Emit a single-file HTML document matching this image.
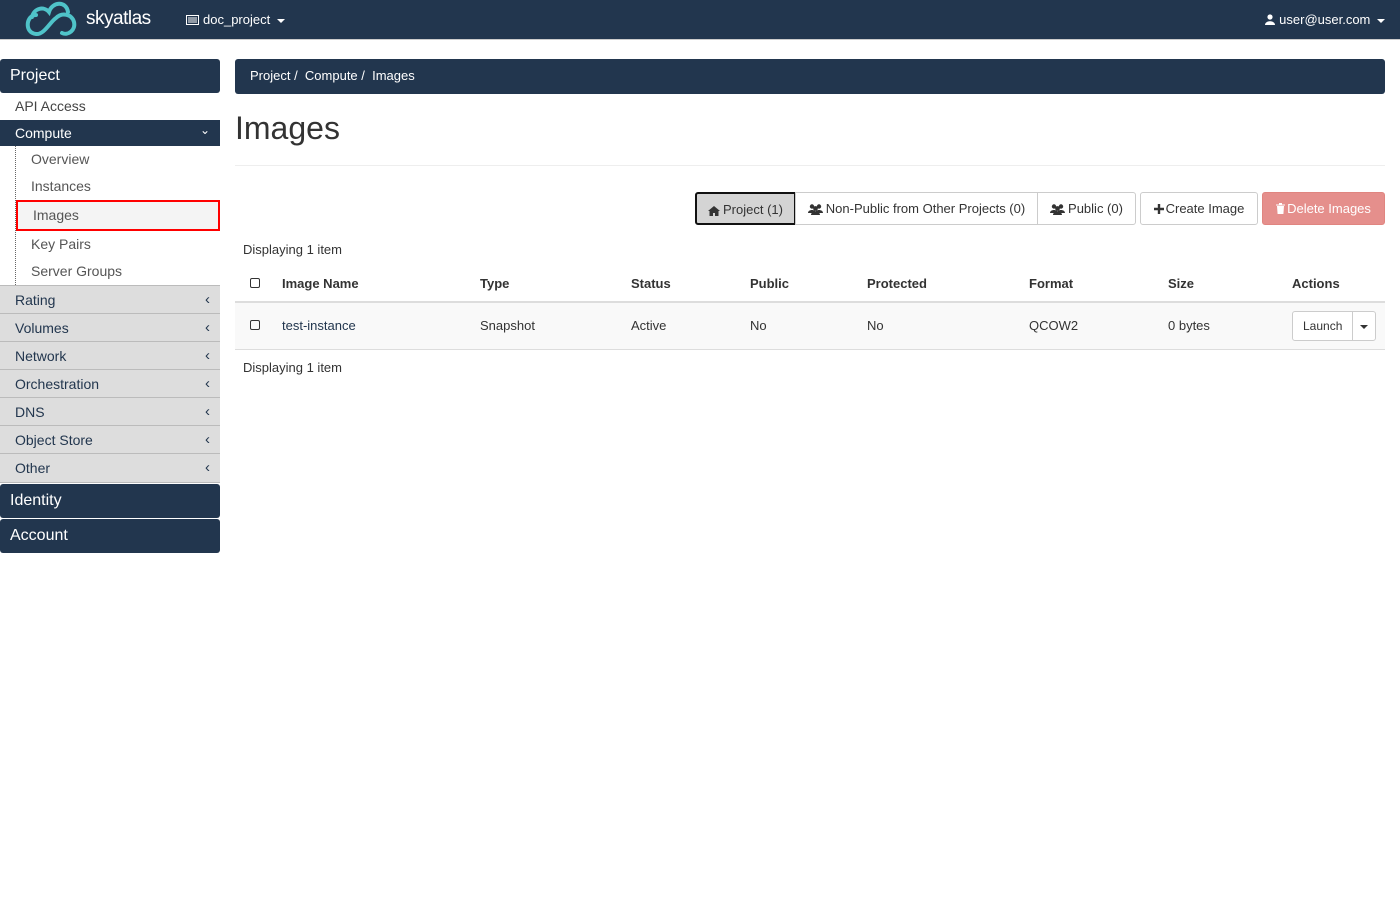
<!DOCTYPE html>
<html><head><meta charset="utf-8"><style>
*{box-sizing:border-box;margin:0;padding:0}
body{width:1400px;height:900px;background:#fff;font-family:"Liberation Sans",Arial,sans-serif;color:#333;font-size:13px;position:relative;overflow:hidden}
.top{position:absolute;left:0;top:0;width:1400px;height:40px;background:#22364e;border-bottom:1px solid #ccc}
.top .brand{position:absolute;left:86px;top:8px;color:#fff;font-size:19px;letter-spacing:-0.5px}
.top .proj{position:absolute;left:186px;top:12px;color:#fff;font-size:13px}
.top .user{position:absolute;right:15px;top:12px;color:#fff;font-size:13px}
.caret{display:inline-block;width:0;height:0;border-left:4px solid transparent;border-right:4px solid transparent;border-top:4px solid currentColor;vertical-align:middle;margin-left:3px}
.side{position:absolute;left:0;top:59px;width:220px}
.hd{background:#22364e;color:#fff;font-size:16px;height:34px;line-height:33px;padding-left:10px;border-radius:3px}
.it{height:27px;line-height:27px;padding-left:15px;font-size:14px;color:#444}
.cmp{background:#22364e;color:#fff;height:26px;line-height:26px;padding-left:15px;font-size:14px;position:relative}
.sub{border-left:1px dotted #666;margin-left:15px}
.sub div{height:27px;line-height:27px;padding-left:15px;font-size:14px;color:#555}
.sub .act{border:2px solid red;background:#f4f4f4;padding-left:15px;height:31px;line-height:27px;margin:0}
.gr{background:#ddd;color:#22364e;height:28px;line-height:28px;padding-left:15px;font-size:14px;border-top:1px solid #bbb;position:relative}
.gr span{position:absolute;right:10px;top:0;font-size:15px}
.cmp span{position:absolute;right:10px;top:-3px;font-size:12px}
.crumb{position:absolute;left:235px;top:59px;width:1150px;height:35px;background:#22364e;border-radius:3px;color:#fff;line-height:34px;padding-left:15px;font-size:13px}
h1{position:absolute;left:235px;top:110px;font-size:32px;font-weight:400;color:#333}
.hr{position:absolute;left:235px;top:165px;width:1150px;border-top:1px solid #eee}
.btn{position:absolute;top:192px;height:33px;line-height:31px;border:1px solid #ccc;background:#fff;font-size:13px;padding:0;text-align:center;color:#333;border-radius:3px;white-space:nowrap}
.btn svg{vertical-align:-2px;margin-right:3px}
.disp{position:absolute;left:243px;font-size:13px}
table{position:absolute;left:235px;top:266px;width:1150px;border-collapse:collapse}
th{text-align:left;font-weight:bold;height:36px;border-bottom:2px solid #ddd;font-size:13px}
td{height:47px;background:#f9f9f9;border-bottom:1px solid #ddd;font-size:13px}
.cb{display:inline-block;width:10px;height:10px;border:1px solid #333;border-radius:2px;margin-left:15px}
</style></head><body>
<div class="top">
<svg style="position:absolute;left:22px;top:0" width="62" height="38" viewBox="0 0 62 38"><path d="M14 15 C4 15 2 33 14 34 C22 35 28 22 34 18 C40 12 50 14 52 22 C54 30 46 36 40 33 M10 17 C12 8 22 6 27 12 C30 2 44 0 46 12" fill="none" stroke="#4fc3c9" stroke-width="4" stroke-linecap="round"/></svg>
<div class="brand">skyatlas</div>
<div class="proj"><svg width="13" height="10" viewBox="0 0 13 10" style="margin-right:4px;vertical-align:-1px"><rect x="0.5" y="0.5" width="12" height="9" fill="none" stroke="#fff"/><path d="M2 3h9M2 5h9M2 7h9" stroke="#fff"/></svg>doc_project <span class="caret"></span></div>
<div class="user"><svg width="10" height="11" viewBox="0 0 10 11" style="margin-right:4px;vertical-align:-1px"><circle cx="5" cy="3" r="2.6" fill="#fff"/><path d="M0 11 C0 6 10 6 10 11Z" fill="#fff"/></svg>user@user.com <span class="caret"></span></div>
</div>
<div class="side">
<div class="hd">Project</div>
<div class="it">API Access</div>
<div class="cmp">Compute<span>&#8964;</span></div>
<div class="sub"><div>Overview</div><div>Instances</div><div class="act">Images</div><div>Key Pairs</div><div>Server Groups</div></div>
<div class="gr">Rating<span>‹</span></div><div class="gr">Volumes<span>‹</span></div><div class="gr">Network<span>‹</span></div><div class="gr">Orchestration<span>‹</span></div><div class="gr">DNS<span>‹</span></div><div class="gr">Object Store<span>‹</span></div><div class="gr" style="border-bottom:1px solid #bbb;height:30px">Other<span>‹</span></div>
<div class="hd" style="margin-top:1px">Identity</div>
<div class="hd" style="margin-top:1px">Account</div>
</div>
<div class="crumb">Project&nbsp;/&nbsp;&nbsp;Compute&nbsp;/&nbsp;&nbsp;Images</div>
<h1>Images</h1>
<div class="hr"></div>
<div class="btn" style="left:695px;width:101px;background:#d4d4d4;border:2px solid #111;border-radius:3px 0 0 3px"><svg width="12" height="10" viewBox="0 0 12 10"><path d="M6 0L0 5h1.5v5h3.5v-3h2v3h3.5v-5H12z" fill="#333"/></svg>Project (1)</div>
<div class="btn" style="left:795px;width:243px;border-radius:0"><svg width="15" height="11" viewBox="0 0 15 11"><circle cx="4" cy="2.5" r="2.2" fill="#333"/><circle cx="11" cy="2.5" r="2.2" fill="#333"/><circle cx="7.5" cy="4.5" r="2.4" fill="#333"/><path d="M0 9C0 5 8 5 8 9ZM7 9C7 5 15 5 15 9ZM3 11C3 6.5 12 6.5 12 11Z" fill="#333"/></svg>Non-Public from Other Projects (0)</div>
<div class="btn" style="left:1037px;width:99px;border-radius:0 3px 3px 0"><svg width="15" height="11" viewBox="0 0 15 11"><circle cx="4" cy="2.5" r="2.2" fill="#333"/><circle cx="11" cy="2.5" r="2.2" fill="#333"/><circle cx="7.5" cy="4.5" r="2.4" fill="#333"/><path d="M0 9C0 5 8 5 8 9ZM7 9C7 5 15 5 15 9ZM3 11C3 6.5 12 6.5 12 11Z" fill="#333"/></svg>Public (0)</div>
<div class="btn" style="left:1140px;width:118px"><svg width="10" height="10" viewBox="0 0 10 10" style="margin-right:2px;vertical-align:-1px"><path d="M3.8 0h2.4v3.8H10v2.4H6.2V10H3.8V6.2H0V3.8h3.8z" fill="#333"/></svg>Create Image</div>
<div class="btn" style="left:1262px;width:123px;background:#e58f8c;border-color:#e08580;color:#fff"><svg width="9" height="11" viewBox="0 0 9 11" style="margin-right:2px;vertical-align:-1px"><path d="M0 1.5h9v1H0zM3 0h3v1.5H3zM1 3h7l-.6 8H1.6z" fill="#fff"/></svg>Delete Images</div>
<div class="disp" style="top:242px">Displaying 1 item</div>
<table><tr><th style="width:47px"><span class="cb"></span></th><th style="width:198px">Image Name</th><th style="width:151px">Type</th><th style="width:119px">Status</th><th style="width:117px">Public</th><th style="width:162px">Protected</th><th style="width:139px">Format</th><th style="width:124px">Size</th><th>Actions</th></tr>
<tr><td><span class="cb"></span></td><td style="color:#22364e">test-instance</td><td>Snapshot</td><td>Active</td><td>No</td><td>No</td><td>QCOW2</td><td>0 bytes</td><td><span style="display:inline-block;border:1px solid #ccc;border-radius:3px;background:#fff;height:30px;line-height:28px;font-size:12px"><span style="padding:0 10px;border-right:1px solid #ccc;display:inline-block">Launch</span><span style="padding:0 7px;display:inline-block"><span class="caret" style="margin:0"></span></span></span></td></tr></table>
<div class="disp" style="top:360px">Displaying 1 item</div>
</body></html>
